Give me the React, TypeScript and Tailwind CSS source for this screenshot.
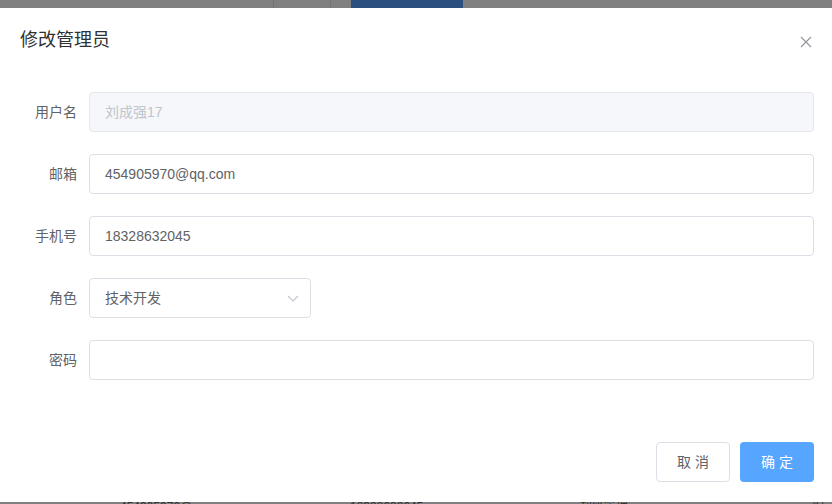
import React from "react";

const font = { fontFamily: '"Liberation Sans", "Noto Sans CJK SC", sans-serif' };

function Row({ label, children }: { label: string; children: React.ReactNode }) {
  return (
    <div className="flex items-center h-[40px] mb-[22px]">
      <label className="w-[69px] pr-[12px] text-right text-[14px] text-[#606266] leading-[40px] shrink-0">{label}</label>
      <div className="flex-1">{children}</div>
    </div>
  );
}

export default function App() {
  return (
    <div className="w-[832px] h-[504px] bg-[#808080] overflow-hidden flex flex-col" style={font}>
      <div className="h-[8px] shrink-0 flex">
        <div className="w-[273px]" />
        <div className="w-px bg-[#737373]" />
        <div className="w-[56px]" />
        <div className="w-px bg-[#737373]" />
        <div className="w-[20px]" />
        <div className="w-[112px] bg-[#2b5080]" />
        <div className="flex-1" />
      </div>
      <div className="h-[494px] shrink-0 bg-white flex flex-col">
        <div className="relative pt-[20px] pb-[10px] pl-[20px] pr-[18px]">
          <span className="block text-[18px] leading-[24px] text-[#303133]">修改管理员</span>
          <button className="absolute top-[28px] right-[20px] w-[12px] h-[12px] flex items-center justify-center">
            <svg width="12" height="12" viewBox="0 0 12 12">
              <path d="M1 1 L11 11 M11 1 L1 11" stroke="#909399" strokeWidth="1.1" />
            </svg>
          </button>
        </div>
        <div className="pt-[30px] pb-[8px] pl-[20px] pr-[18px]">
          <Row label="用户名">
            <div className="h-[40px] rounded-[4px] border border-[#e4e7ed] bg-[#f5f7fa] px-[15px] flex items-center text-[14px] text-[#c0c4cc]">刘成强17</div>
          </Row>
          <Row label="邮箱">
            <div className="h-[40px] rounded-[4px] border border-[#dcdfe6] px-[15px] flex items-center text-[14px] text-[#606266]">454905970@qq.com</div>
          </Row>
          <Row label="手机号">
            <div className="h-[40px] rounded-[4px] border border-[#dcdfe6] px-[15px] flex items-center text-[14px] text-[#606266]">18328632045</div>
          </Row>
          <Row label="角色">
            <div className="w-[222px] h-[40px] rounded-[4px] border border-[#dcdfe6] pl-[15px] pr-[10px] flex items-center justify-between text-[14px] text-[#606266]">
              <span>技术开发</span>
              <svg width="14" height="14" viewBox="0 0 14 14">
                <path d="M2 5 L7 10 L12 5" stroke="#c0c4cc" strokeWidth="1.1" fill="none" />
              </svg>
            </div>
          </Row>
          <Row label="密码">
            <div className="h-[40px] rounded-[4px] border border-[#dcdfe6]" />
          </Row>
        </div>
        <div className="flex justify-end gap-[10px] pt-[32px] pb-[20px] pr-[18px]">
          <button className="w-[74px] h-[40px] rounded-[4px] border border-[#dcdfe6] bg-white text-[14px] text-[#606266]">取 消</button>
          <button className="w-[74px] h-[40px] rounded-[4px] bg-[#56a5ff] text-[14px] text-white">确 定</button>
        </div>
      </div>
      <div className="h-[2px] shrink-0 overflow-hidden relative">
        <div className="absolute top-[-2px] left-[120px] text-[12px] leading-[14px] text-[#303030]">454905970@qq.com</div>
        <div className="absolute top-[-2px] left-[350px] text-[12px] leading-[14px] text-[#303030]">18328632045</div>
        <div className="absolute top-[-2px] left-[580px] text-[12px] leading-[14px] text-[#303030]">超级管理</div>
        <div className="absolute top-[-2px] left-[812px] text-[12px] leading-[14px] text-[#303030]">编辑</div>
      </div>
    </div>
  );
}
